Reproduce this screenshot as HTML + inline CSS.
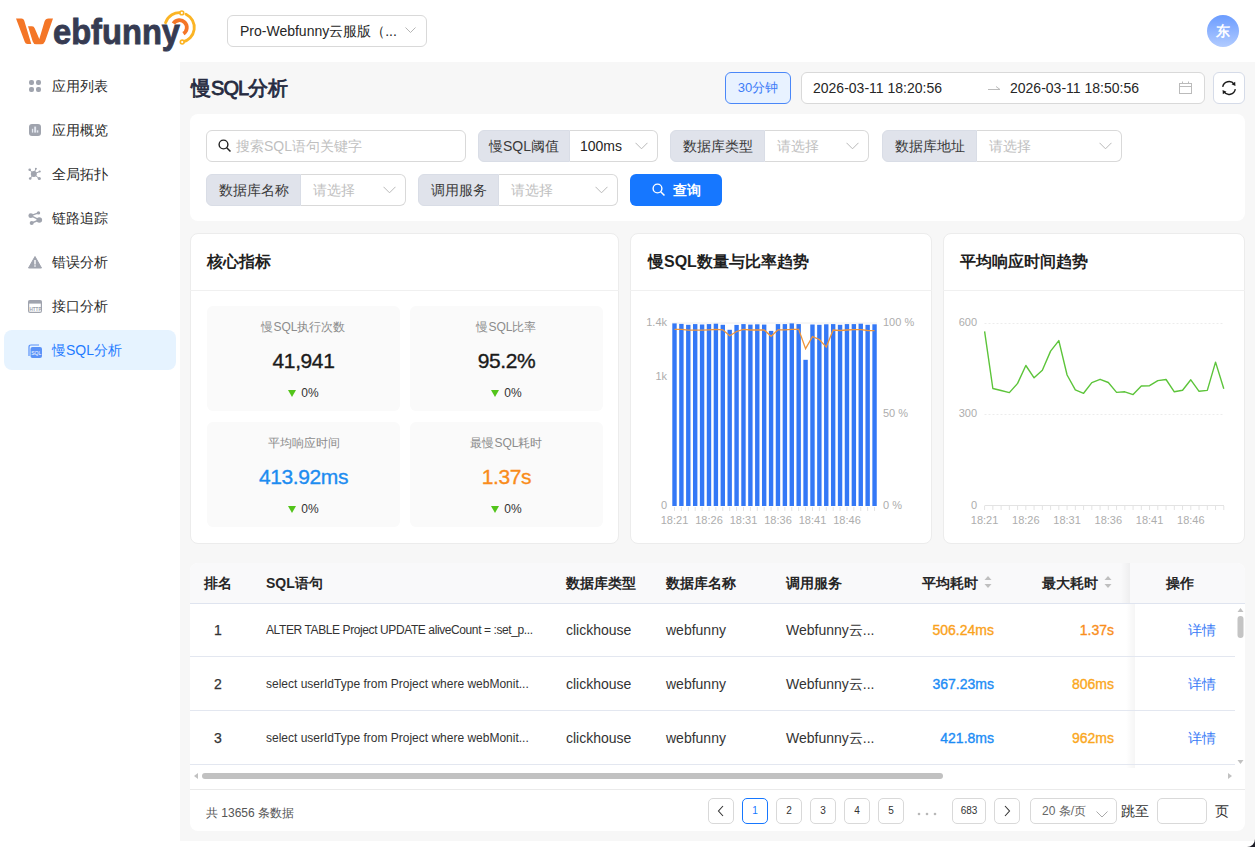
<!DOCTYPE html>
<html><head><meta charset="utf-8">
<style>
*{box-sizing:border-box;margin:0;padding:0}
html,body{width:1255px;height:847px;overflow:hidden;background:#fff;font-family:"Liberation Sans",sans-serif;color:#262626}
.a{position:absolute}
.main{left:180px;top:62px;width:1075px;height:779px;background:#f7f7f7}
.card{position:absolute;background:#fff;border-radius:8px}
.nav{position:absolute;left:4px;width:172px;height:40px;border-radius:8px;font-size:14px;line-height:40px;color:#2a2a2a}
.nav span{position:absolute;left:48px;top:0}
.nav svg{position:absolute;left:25px;top:14px}
.lbl{position:absolute;height:32px;background:#e0e3eb;border:1px solid #d9dde6;border-radius:6px 0 0 6px;font-size:14px;line-height:30px;color:#3a3a3a;text-align:center}
.sel{position:absolute;height:32px;background:#fff;border:1px solid #d9d9d9;border-left:none;border-radius:0 6px 6px 0;font-size:14px;line-height:30px;color:#bfbfbf;padding-left:12px}
.chev{position:absolute;right:9px;top:11px}
.ttl{position:absolute;top:250px;font-size:16px;line-height:24px;font-weight:bold;color:#1f1f1f}
.mb{position:absolute;width:193px;height:105px;background:#fafafa;border-radius:6px;text-align:center}
.ml{position:absolute;left:0;right:0;top:12px;line-height:18px;font-size:12px;color:#8c8c8c}
.mv{position:absolute;left:0;right:0;top:40px;line-height:30px;font-size:21px;letter-spacing:-0.4px;color:#1a1a1a;-webkit-text-stroke:0.35px}
.mc{position:absolute;left:0;right:0;top:79px;line-height:16px;font-size:12px;color:#333}
.mc i{display:inline-block;width:0;height:0;border-left:4px solid transparent;border-right:4px solid transparent;border-top:7px solid #52c41a;margin-right:5px;vertical-align:0px}
.th{position:absolute;top:563px;line-height:40px;font-size:14px;font-weight:bold;color:#262626}
.row{position:absolute;left:190px;width:1045px;height:54px;border-bottom:1px solid #e3e7f0}
.td{position:absolute;line-height:54px;font-size:14px;color:#333;white-space:nowrap}
.td.num{left:204px;width:28px;text-align:center;-webkit-text-stroke:0.25px}
.td.sql{left:266px;font-size:12px}
.td.r{text-align:right;-webkit-text-stroke:0.35px}
.td.lk{left:1188px;color:#3b7cf6}
.pg{position:absolute;top:798px;width:26px;height:26px;border:1px solid #d9d9d9;border-radius:5px;background:#fff;font-size:10px;line-height:24px;text-align:center;color:#333}
.pg.act{border-color:#1677ff;color:#1677ff}
</style></head><body>
<!-- header -->
<div class="a" style="left:0;top:0;width:1255px;height:62px;background:#fff"></div>
<svg class="a" style="left:0;top:0" width="200" height="60" viewBox="0 0 200 60">
  <path d="M16 18.5 L21.5 18.5 Q23.5 18.5 24.2 20.5 L31.3 44 L27.5 44 Q25.5 44 24.8 42 Z" fill="#f47627"/>
  <path d="M28 26.2 L32 26.2 Q34 26.2 34.8 28.5 L39.3 39 L44.5 21.5 Q45.5 18.5 48.5 18.5 L53 18.5 L45 41.5 Q44 44.2 41 44.2 L36 44.2 Q33.5 44.2 32.7 41.5 Z" fill="#f47627"/>
  <text x="53" y="44" font-family="Liberation Sans" font-weight="bold" font-size="35" fill="#363b52" stroke="#363b52" stroke-width="0.9" textLength="127" lengthAdjust="spacingAndGlyphs">ebfunny</text>
  <path d="M165.51 22.68 A14.8 14.8 0 0 1 181.82 12.88" stroke="#fbb424" stroke-width="2.8" fill="none" stroke-linecap="round"/>
  <path d="M185.99 14.20 A14.8 14.8 0 0 1 182.20 42.05" stroke="#fbb424" stroke-width="2.8" fill="none" stroke-linecap="round"/>
  <circle cx="181.82" cy="12.88" r="1.9" fill="#fff" stroke="#fbb424" stroke-width="1.6"/>
  <circle cx="182.20" cy="42.05" r="1.9" fill="#fff" stroke="#fbb424" stroke-width="1.6"/>
  <path d="M173.38 23.52 A7.3 7.3 0 1 1 183.37 33.69" stroke="#f47627" stroke-width="3.8" fill="none"/>
</svg>
<div class="a" style="left:227px;top:15px;width:200px;height:32px;border:1px solid #d9d9d9;border-radius:6px;background:#fff"></div>
<div class="a" style="left:240px;top:15px;height:32px;line-height:32px;font-size:14px;color:#262626;white-space:nowrap">Pro-Webfunny云服版（...</div>
<svg class="a" style="left:405px;top:27px" width="11" height="7"><path d="M0.5 0.5 L5.5 5.5 L10.5 0.5" stroke="#b5b5b5" fill="none"/></svg>
<div class="a" style="left:1207px;top:15px;width:32px;height:32px;border-radius:50%;background:linear-gradient(#6b9cff,#b1cbff);color:#fff;font-size:14px;line-height:33px;text-align:center;font-weight:bold">东</div>

<!-- sidebar -->
<div class="nav" style="top:66px"><svg width="13" height="13"><rect x="0" y="0" width="5" height="5" rx="2" fill="#a0a4ae"/><rect x="7" y="0" width="5" height="5" rx="2" fill="#a0a4ae"/><rect x="0" y="7" width="5" height="5" rx="2" fill="#a0a4ae"/><rect x="7" y="7" width="5" height="5" rx="2" fill="#a0a4ae"/></svg><span>应用列表</span></div>
<div class="nav" style="top:110px"><svg width="13" height="13"><rect x="0" y="0" width="12" height="12" rx="3" fill="#a0a4ae"/><rect x="2.9" y="4.8" width="1.3" height="3.8" fill="#e4e8f0"/><rect x="5.2" y="2.6" width="1.9" height="6" fill="#e4e8f0"/><rect x="7.8" y="6.3" width="1.5" height="2.3" fill="#e4e8f0"/></svg><span>应用概览</span></div>
<div class="nav" style="top:154px"><svg width="14" height="14" style="overflow:visible"><g stroke="#a0a4ae" stroke-width="1" fill="none"><path d="M4.8 6 L0.5 1.8 M4.8 6 L6.9 0.5 M4.8 6 L10.7 3.5 M4.8 6 L1 10.7 M4.8 6 L10.3 10.7"/></g><g fill="#a0a4ae"><circle cx="4.8" cy="6" r="3"/><circle cx="0.7" cy="1.8" r="1.3"/><circle cx="6.9" cy="0.7" r="1"/><circle cx="10.7" cy="3.5" r="1.1"/><circle cx="1.2" cy="10.5" r="1.3"/><circle cx="10.3" cy="10.5" r="1.6"/></g></svg><span>全局拓扑</span></div>
<div class="nav" style="top:198px"><svg width="14" height="14" style="overflow:visible"><g stroke="#a0a4ae" stroke-width="1.4" fill="none"><path d="M1.8 3.7 L9.5 0.8 M1.8 3.7 L10.3 8 L2.7 11"/></g><g fill="#a0a4ae"><circle cx="1.8" cy="3.7" r="2.4"/><circle cx="9.5" cy="0.9" r="1.7"/><circle cx="10.3" cy="8" r="2.8"/><circle cx="2.7" cy="11" r="2"/></g></svg><span>链路追踪</span></div>
<div class="nav" style="top:242px"><svg style="left:24px" width="14" height="13"><path d="M7 0.5 L13.5 12 L0.5 12 Z" fill="#a0a4ae" stroke="#a0a4ae" stroke-linejoin="round"/><rect x="6.3" y="4" width="1.4" height="4.5" fill="#fff"/><rect x="6.3" y="9.3" width="1.4" height="1.4" fill="#fff"/></svg><span>错误分析</span></div>
<div class="nav" style="top:286px"><svg style="left:24px" width="14" height="13"><rect x="0.6" y="0.6" width="12.8" height="11.8" rx="1.5" fill="none" stroke="#a0a4ae" stroke-width="1.2"/><rect x="0.6" y="0.6" width="12.8" height="3" fill="#a0a4ae"/><text x="7.5" y="10.8" font-size="6" font-family="Liberation Sans" font-weight="bold" text-anchor="middle" fill="#9a9eaa" textLength="12" lengthAdjust="spacingAndGlyphs">HTTP</text></svg><span>接口分析</span></div>
<div class="nav" style="top:330px;background:#e6f3ff;color:#1f7bff"><svg style="left:24px" width="14" height="15"><path d="M1 12 L1 3 Q1 1 3 1 L11 1" stroke="#5a92f8" stroke-width="1.2" fill="none"/><rect x="2.5" y="3" width="11.5" height="11" rx="2" fill="#5a92f8"/><text x="8.2" y="11" font-size="5" font-family="Liberation Sans" text-anchor="middle" fill="#fff">SQL</text></svg><span>慢SQL分析</span></div>

<!-- main -->
<div class="a main"></div>
<div class="a" style="left:191px;top:74px;font-size:20px;line-height:28px;color:#262b40;-webkit-text-stroke:0.8px">慢<span style="letter-spacing:-0.9px">SQL</span>分析</div>
<div class="a" style="left:725px;top:72px;width:66px;height:32px;border:1px solid #4a87f8;border-radius:6px;background:#e8f2ff;color:#3d7cf7;font-size:13px;line-height:30px;text-align:center">30分钟</div>
<div class="a" style="left:801px;top:72px;width:404px;height:32px;border:1px solid #d9d9d9;border-radius:6px;background:#fff"></div>
<div class="a" style="left:813px;top:72px;line-height:32px;font-size:14px;color:#262626">2026-03-11 18:20:56</div>
<svg class="a" style="left:988px;top:84px" width="13" height="8"><path d="M0 5.5 L12 5.5 L8 2.5" stroke="#bbb" fill="none"/></svg>
<div class="a" style="left:1010px;top:72px;line-height:32px;font-size:14px;color:#262626">2026-03-11 18:50:56</div>
<svg class="a" style="left:1179px;top:81px" width="14" height="14"><rect x="0.5" y="2.5" width="12" height="10" fill="none" stroke="#bbb"/><path d="M0.5 5.5 H12.5 M3.5 0.5 V3 M9.5 0.5 V3" stroke="#bbb"/></svg>
<div class="a" style="left:1213px;top:72px;width:32px;height:32px;border:1px solid #d5dbe8;border-radius:6px;background:#fff"></div>
<svg class="a" style="left:1215px;top:74px" width="28" height="28"><path d="M7.70 12.89 A6.4 6.4 0 0 1 19.24 10.33" stroke="#1a1a1a" stroke-width="1.4" fill="none"/><path d="M20.30 15.11 A6.4 6.4 0 0 1 8.76 17.67" stroke="#1a1a1a" stroke-width="1.4" fill="none"/><path d="M20.44 12.03 L20.15 7.79 L16.55 10.31 Z" fill="#1a1a1a"/><path d="M7.56 15.97 L7.85 20.21 L11.45 17.69 Z" fill="#1a1a1a"/></svg>

<!-- filter card -->
<div class="card" style="left:190px;top:114px;width:1055px;height:107px"></div>
<div class="a" style="left:206px;top:130px;width:260px;height:32px;border:1px solid #d9d9d9;border-radius:6px;background:#fff"></div>
<svg class="a" style="left:218px;top:139px" width="14" height="14"><circle cx="5.5" cy="5.5" r="4.4" stroke="#222" stroke-width="1.4" fill="none"/><path d="M8.7 8.7 L12.5 12.5" stroke="#222" stroke-width="1.5"/></svg>
<div class="a" style="left:236px;top:130px;line-height:32px;font-size:14px;color:#bfbfbf">搜索SQL语句关键字</div>

<div class="lbl" style="left:478px;top:130px;width:92px">慢SQL阈值</div>
<div class="sel" style="left:570px;top:130px;width:88px;color:#262626;padding-left:10px">100ms<svg class="chev" width="13" height="8"><path d="M0.5 0.8 L6.5 6.8 L12.5 0.8" stroke="#b8b8b8" fill="none"/></svg></div>
<div class="lbl" style="left:670px;top:130px;width:95px">数据库类型</div>
<div class="sel" style="left:765px;top:130px;width:104px">请选择<svg class="chev" width="13" height="8"><path d="M0.5 0.8 L6.5 6.8 L12.5 0.8" stroke="#b8b8b8" fill="none"/></svg></div>
<div class="lbl" style="left:882px;top:130px;width:95px">数据库地址</div>
<div class="sel" style="left:977px;top:130px;width:145px">请选择<svg class="chev" width="13" height="8"><path d="M0.5 0.8 L6.5 6.8 L12.5 0.8" stroke="#b8b8b8" fill="none"/></svg></div>

<div class="lbl" style="left:206px;top:174px;width:95px">数据库名称</div>
<div class="sel" style="left:301px;top:174px;width:105px">请选择<svg class="chev" width="13" height="8"><path d="M0.5 0.8 L6.5 6.8 L12.5 0.8" stroke="#b8b8b8" fill="none"/></svg></div>
<div class="lbl" style="left:418px;top:174px;width:81px">调用服务</div>
<div class="sel" style="left:499px;top:174px;width:119px">请选择<svg class="chev" width="13" height="8"><path d="M0.5 0.8 L6.5 6.8 L12.5 0.8" stroke="#b8b8b8" fill="none"/></svg></div>
<div class="a" style="left:630px;top:174px;width:92px;height:32px;border-radius:6px;background:#1677ff"></div>
<svg class="a" style="left:652px;top:183px" width="14" height="14"><circle cx="5.5" cy="5.5" r="4.4" stroke="#fff" stroke-width="1.4" fill="none"/><path d="M8.7 8.7 L12.5 12.5" stroke="#fff" stroke-width="1.5"/></svg>
<div class="a" style="left:673px;top:174px;line-height:32px;font-size:14px;color:#fff;font-weight:bold">查询</div>


<!-- core metrics card -->
<div class="card" style="left:190px;top:233px;width:429px;height:311px;border:1px solid #ececec"></div>
<div class="card" style="left:630px;top:233px;width:302px;height:311px;border:1px solid #ececec"></div>
<div class="card" style="left:943px;top:233px;width:302px;height:311px;border:1px solid #ececec"></div>
<div class="a" style="left:190px;top:290px;width:429px;height:1px;background:#f0f0f0"></div>
<div class="a" style="left:630px;top:290px;width:302px;height:1px;background:#f0f0f0"></div>
<div class="a" style="left:943px;top:290px;width:302px;height:1px;background:#f0f0f0"></div>
<div class="ttl" style="left:207px">核心指标</div>
<div class="ttl" style="left:648px">慢SQL数量与比率趋势</div>
<div class="ttl" style="left:960px">平均响应时间趋势</div>

<div class="mb" style="left:207px;top:306px"><div class="ml">慢SQL执行次数</div><div class="mv">41,941</div><div class="mc"><i></i>0%</div></div>
<div class="mb" style="left:410px;top:306px"><div class="ml">慢SQL比率</div><div class="mv">95.2%</div><div class="mc"><i></i>0%</div></div>
<div class="mb" style="left:207px;top:422px"><div class="ml">平均响应时间</div><div class="mv" style="color:#1d8cf0">413.92ms</div><div class="mc"><i></i>0%</div></div>
<div class="mb" style="left:410px;top:422px"><div class="ml">最慢SQL耗时</div><div class="mv" style="color:#f98c1b">1.37s</div><div class="mc"><i></i>0%</div></div>

<svg class="a" style="left:0;top:0" width="1255" height="847">
<line x1="672" y1="323" x2="877" y2="323" stroke="#eee" stroke-width="1"/>
<rect x="672.30" y="323.4" width="4.4" height="182.6" fill="#3478f6"/>
<rect x="679.20" y="323.9" width="4.4" height="182.1" fill="#3478f6"/>
<rect x="686.10" y="324.8" width="4.4" height="181.2" fill="#3478f6"/>
<rect x="692.99" y="324.1" width="4.4" height="181.9" fill="#3478f6"/>
<rect x="699.89" y="324.5" width="4.4" height="181.5" fill="#3478f6"/>
<rect x="706.79" y="324.1" width="4.4" height="181.9" fill="#3478f6"/>
<rect x="713.69" y="323.7" width="4.4" height="182.3" fill="#3478f6"/>
<rect x="720.59" y="324.8" width="4.4" height="181.2" fill="#3478f6"/>
<rect x="727.49" y="329.8" width="4.4" height="176.2" fill="#3478f6"/>
<rect x="734.38" y="324.9" width="4.4" height="181.1" fill="#3478f6"/>
<rect x="741.28" y="324.1" width="4.4" height="181.9" fill="#3478f6"/>
<rect x="748.18" y="324.6" width="4.4" height="181.4" fill="#3478f6"/>
<rect x="755.08" y="324.3" width="4.4" height="181.7" fill="#3478f6"/>
<rect x="761.98" y="324.6" width="4.4" height="181.4" fill="#3478f6"/>
<rect x="768.88" y="330.9" width="4.4" height="175.1" fill="#3478f6"/>
<rect x="775.77" y="324.1" width="4.4" height="181.9" fill="#3478f6"/>
<rect x="782.67" y="324.1" width="4.4" height="181.9" fill="#3478f6"/>
<rect x="789.57" y="323.4" width="4.4" height="182.6" fill="#3478f6"/>
<rect x="796.47" y="324.1" width="4.4" height="181.9" fill="#3478f6"/>
<rect x="803.37" y="359.8" width="4.4" height="146.2" fill="#3478f6"/>
<rect x="810.27" y="324.5" width="4.4" height="181.5" fill="#3478f6"/>
<rect x="817.16" y="324.8" width="4.4" height="181.2" fill="#3478f6"/>
<rect x="824.06" y="324.3" width="4.4" height="181.7" fill="#3478f6"/>
<rect x="830.96" y="324.1" width="4.4" height="181.9" fill="#3478f6"/>
<rect x="837.86" y="324.8" width="4.4" height="181.2" fill="#3478f6"/>
<rect x="844.76" y="324.1" width="4.4" height="181.9" fill="#3478f6"/>
<rect x="851.66" y="324.1" width="4.4" height="181.9" fill="#3478f6"/>
<rect x="858.55" y="323.7" width="4.4" height="182.3" fill="#3478f6"/>
<rect x="865.45" y="324.8" width="4.4" height="181.2" fill="#3478f6"/>
<rect x="872.35" y="324.3" width="4.4" height="181.7" fill="#3478f6"/>
<polyline points="674.50,329.3 681.40,329.3 688.30,330.2 695.19,330.2 702.09,330.2 708.99,329.8 715.89,329.3 722.79,329.8 729.69,335.7 736.58,331.5 743.48,329.3 750.38,330.0 757.28,330.0 764.18,330.0 771.08,336.3 777.97,329.8 784.87,329.8 791.77,329.3 798.67,329.3 805.57,348.6 812.47,336.6 819.36,339.5 826.26,347.1 833.16,330.0 840.06,330.5 846.96,330.0 853.86,329.6 860.75,329.6 867.65,330.5 874.55,330.7" fill="none" stroke="#f0953a" stroke-width="1.3"/>
<line x1="674.50" y1="507" x2="674.50" y2="511" stroke="#e3e3e3" stroke-width="1"/>
<line x1="681.40" y1="507" x2="681.40" y2="511" stroke="#e3e3e3" stroke-width="1"/>
<line x1="688.30" y1="507" x2="688.30" y2="511" stroke="#e3e3e3" stroke-width="1"/>
<line x1="695.19" y1="507" x2="695.19" y2="511" stroke="#e3e3e3" stroke-width="1"/>
<line x1="702.09" y1="507" x2="702.09" y2="511" stroke="#e3e3e3" stroke-width="1"/>
<line x1="708.99" y1="507" x2="708.99" y2="511" stroke="#e3e3e3" stroke-width="1"/>
<line x1="715.89" y1="507" x2="715.89" y2="511" stroke="#e3e3e3" stroke-width="1"/>
<line x1="722.79" y1="507" x2="722.79" y2="511" stroke="#e3e3e3" stroke-width="1"/>
<line x1="729.69" y1="507" x2="729.69" y2="511" stroke="#e3e3e3" stroke-width="1"/>
<line x1="736.58" y1="507" x2="736.58" y2="511" stroke="#e3e3e3" stroke-width="1"/>
<line x1="743.48" y1="507" x2="743.48" y2="511" stroke="#e3e3e3" stroke-width="1"/>
<line x1="750.38" y1="507" x2="750.38" y2="511" stroke="#e3e3e3" stroke-width="1"/>
<line x1="757.28" y1="507" x2="757.28" y2="511" stroke="#e3e3e3" stroke-width="1"/>
<line x1="764.18" y1="507" x2="764.18" y2="511" stroke="#e3e3e3" stroke-width="1"/>
<line x1="771.08" y1="507" x2="771.08" y2="511" stroke="#e3e3e3" stroke-width="1"/>
<line x1="777.97" y1="507" x2="777.97" y2="511" stroke="#e3e3e3" stroke-width="1"/>
<line x1="784.87" y1="507" x2="784.87" y2="511" stroke="#e3e3e3" stroke-width="1"/>
<line x1="791.77" y1="507" x2="791.77" y2="511" stroke="#e3e3e3" stroke-width="1"/>
<line x1="798.67" y1="507" x2="798.67" y2="511" stroke="#e3e3e3" stroke-width="1"/>
<line x1="805.57" y1="507" x2="805.57" y2="511" stroke="#e3e3e3" stroke-width="1"/>
<line x1="812.47" y1="507" x2="812.47" y2="511" stroke="#e3e3e3" stroke-width="1"/>
<line x1="819.36" y1="507" x2="819.36" y2="511" stroke="#e3e3e3" stroke-width="1"/>
<line x1="826.26" y1="507" x2="826.26" y2="511" stroke="#e3e3e3" stroke-width="1"/>
<line x1="833.16" y1="507" x2="833.16" y2="511" stroke="#e3e3e3" stroke-width="1"/>
<line x1="840.06" y1="507" x2="840.06" y2="511" stroke="#e3e3e3" stroke-width="1"/>
<line x1="846.96" y1="507" x2="846.96" y2="511" stroke="#e3e3e3" stroke-width="1"/>
<line x1="853.86" y1="507" x2="853.86" y2="511" stroke="#e3e3e3" stroke-width="1"/>
<line x1="860.75" y1="507" x2="860.75" y2="511" stroke="#e3e3e3" stroke-width="1"/>
<line x1="867.65" y1="507" x2="867.65" y2="511" stroke="#e3e3e3" stroke-width="1"/>
<line x1="874.55" y1="507" x2="874.55" y2="511" stroke="#e3e3e3" stroke-width="1"/>
<text x="674.5" y="524" font-size="11" text-anchor="middle" fill="#adadad" font-family="Liberation Sans">18:21</text>
<text x="709.0" y="524" font-size="11" text-anchor="middle" fill="#adadad" font-family="Liberation Sans">18:26</text>
<text x="743.5" y="524" font-size="11" text-anchor="middle" fill="#adadad" font-family="Liberation Sans">18:31</text>
<text x="778.0" y="524" font-size="11" text-anchor="middle" fill="#adadad" font-family="Liberation Sans">18:36</text>
<text x="812.5" y="524" font-size="11" text-anchor="middle" fill="#adadad" font-family="Liberation Sans">18:41</text>
<text x="847.0" y="524" font-size="11" text-anchor="middle" fill="#adadad" font-family="Liberation Sans">18:46</text>
<text x="667" y="326" font-size="11" text-anchor="end" fill="#adadad" font-family="Liberation Sans">1.4k</text>
<text x="667" y="380" font-size="11" text-anchor="end" fill="#adadad" font-family="Liberation Sans">1k</text>
<text x="667" y="509" font-size="11" text-anchor="end" fill="#adadad" font-family="Liberation Sans">0</text>
<text x="883" y="326" font-size="11" fill="#adadad" font-family="Liberation Sans">100 %</text>
<text x="883" y="417" font-size="11" fill="#adadad" font-family="Liberation Sans">50 %</text>
<text x="883" y="509" font-size="11" fill="#adadad" font-family="Liberation Sans">0 %</text>
<line x1="984.5" y1="323.5" x2="1224" y2="323.5" stroke="#ececec" stroke-dasharray="2,2"/>
<line x1="984.5" y1="414.5" x2="1224" y2="414.5" stroke="#ececec" stroke-dasharray="2,2"/>
<line x1="984.5" y1="505.5" x2="1224" y2="505.5" stroke="#e3e3e3"/>
<line x1="984.60" y1="506" x2="984.60" y2="510" stroke="#e3e3e3"/>
<line x1="992.85" y1="506" x2="992.85" y2="510" stroke="#e3e3e3"/>
<line x1="1001.10" y1="506" x2="1001.10" y2="510" stroke="#e3e3e3"/>
<line x1="1009.34" y1="506" x2="1009.34" y2="510" stroke="#e3e3e3"/>
<line x1="1017.59" y1="506" x2="1017.59" y2="510" stroke="#e3e3e3"/>
<line x1="1025.84" y1="506" x2="1025.84" y2="510" stroke="#e3e3e3"/>
<line x1="1034.09" y1="506" x2="1034.09" y2="510" stroke="#e3e3e3"/>
<line x1="1042.34" y1="506" x2="1042.34" y2="510" stroke="#e3e3e3"/>
<line x1="1050.59" y1="506" x2="1050.59" y2="510" stroke="#e3e3e3"/>
<line x1="1058.83" y1="506" x2="1058.83" y2="510" stroke="#e3e3e3"/>
<line x1="1067.08" y1="506" x2="1067.08" y2="510" stroke="#e3e3e3"/>
<line x1="1075.33" y1="506" x2="1075.33" y2="510" stroke="#e3e3e3"/>
<line x1="1083.58" y1="506" x2="1083.58" y2="510" stroke="#e3e3e3"/>
<line x1="1091.83" y1="506" x2="1091.83" y2="510" stroke="#e3e3e3"/>
<line x1="1100.08" y1="506" x2="1100.08" y2="510" stroke="#e3e3e3"/>
<line x1="1108.32" y1="506" x2="1108.32" y2="510" stroke="#e3e3e3"/>
<line x1="1116.57" y1="506" x2="1116.57" y2="510" stroke="#e3e3e3"/>
<line x1="1124.82" y1="506" x2="1124.82" y2="510" stroke="#e3e3e3"/>
<line x1="1133.07" y1="506" x2="1133.07" y2="510" stroke="#e3e3e3"/>
<line x1="1141.32" y1="506" x2="1141.32" y2="510" stroke="#e3e3e3"/>
<line x1="1149.57" y1="506" x2="1149.57" y2="510" stroke="#e3e3e3"/>
<line x1="1157.81" y1="506" x2="1157.81" y2="510" stroke="#e3e3e3"/>
<line x1="1166.06" y1="506" x2="1166.06" y2="510" stroke="#e3e3e3"/>
<line x1="1174.31" y1="506" x2="1174.31" y2="510" stroke="#e3e3e3"/>
<line x1="1182.56" y1="506" x2="1182.56" y2="510" stroke="#e3e3e3"/>
<line x1="1190.81" y1="506" x2="1190.81" y2="510" stroke="#e3e3e3"/>
<line x1="1199.06" y1="506" x2="1199.06" y2="510" stroke="#e3e3e3"/>
<line x1="1207.30" y1="506" x2="1207.30" y2="510" stroke="#e3e3e3"/>
<line x1="1215.55" y1="506" x2="1215.55" y2="510" stroke="#e3e3e3"/>
<line x1="1223.80" y1="506" x2="1223.80" y2="510" stroke="#e3e3e3"/>
<polyline points="984.60,331.3 992.85,388.5 1001.10,390.5 1009.34,392.6 1017.59,383.4 1025.84,365.5 1034.09,377.8 1042.34,370.2 1050.59,351.1 1058.83,340.6 1067.08,375.0 1075.33,389.9 1083.58,393.3 1091.83,382.6 1100.08,379.3 1108.32,382.5 1116.57,392.4 1124.82,391.8 1133.07,394.6 1141.32,386.0 1149.57,385.7 1157.81,380.6 1166.06,379.5 1174.31,391.8 1182.56,390.2 1190.81,379.8 1199.06,391.3 1207.30,390.4 1215.55,362.1 1223.80,388.7" fill="none" stroke="#5cc43a" stroke-width="1.4" stroke-linejoin="round"/>
<text x="984.6" y="524" font-size="11" text-anchor="middle" fill="#adadad" font-family="Liberation Sans">18:21</text>
<text x="1025.8" y="524" font-size="11" text-anchor="middle" fill="#adadad" font-family="Liberation Sans">18:26</text>
<text x="1067.1" y="524" font-size="11" text-anchor="middle" fill="#adadad" font-family="Liberation Sans">18:31</text>
<text x="1108.3" y="524" font-size="11" text-anchor="middle" fill="#adadad" font-family="Liberation Sans">18:36</text>
<text x="1149.6" y="524" font-size="11" text-anchor="middle" fill="#adadad" font-family="Liberation Sans">18:41</text>
<text x="1190.8" y="524" font-size="11" text-anchor="middle" fill="#adadad" font-family="Liberation Sans">18:46</text>
<text x="977" y="326" font-size="11" text-anchor="end" fill="#adadad" font-family="Liberation Sans">600</text>
<text x="977" y="417" font-size="11" text-anchor="end" fill="#adadad" font-family="Liberation Sans">300</text>
<text x="977" y="509" font-size="11" text-anchor="end" fill="#adadad" font-family="Liberation Sans">0</text>
</svg>

<!-- table card -->
<div class="card" style="left:190px;top:563px;width:1055px;height:268px"></div>
<div class="a" style="left:190px;top:563px;width:1055px;height:41px;background:#f9f9fa;border-radius:8px 8px 0 0;border-bottom:1px solid #dfe4ef"></div>
<div class="th" style="left:204px">排名</div>
<div class="th" style="left:266px">SQL语句</div>
<div class="th" style="left:566px">数据库类型</div>
<div class="th" style="left:666px">数据库名称</div>
<div class="th" style="left:786px">调用服务</div>
<div class="th" style="left:922px">平均耗时</div>
<div class="th" style="left:1042px">最大耗时</div>
<div class="th" style="left:1166px">操作</div>
<svg class="a" style="left:984px;top:575px" width="8" height="14"><path d="M4 1 L7.5 5 L0.5 5 Z" fill="#bfbfbf"/><path d="M4 13 L7.5 9 L0.5 9 Z" fill="#bfbfbf"/></svg>
<svg class="a" style="left:1104px;top:575px" width="8" height="14"><path d="M4 1 L7.5 5 L0.5 5 Z" fill="#bfbfbf"/><path d="M4 13 L7.5 9 L0.5 9 Z" fill="#bfbfbf"/></svg>
<div class="a" style="left:1121px;top:563px;width:9px;height:40px;background:linear-gradient(90deg,rgba(0,0,0,0),rgba(0,0,0,0.045))"></div>
<div class="a" style="left:1126px;top:604px;width:9px;height:164px;background:linear-gradient(90deg,rgba(0,0,0,0),rgba(0,0,0,0.04))"></div>

<div class="row" style="top:603px"></div>
<div class="row" style="top:657px"></div>
<div class="row" style="top:711px"></div>
<div class="td num" style="top:603px">1</div>
<div class="td sql" style="top:603px"><span style="letter-spacing:-0.4px">ALTER TABLE Project UPDATE aliveCount = :set_p...</span></div>
<div class="td" style="top:603px;left:566px">clickhouse</div>
<div class="td" style="top:603px;left:666px">webfunny</div>
<div class="td" style="top:603px;left:786px">Webfunny云...</div>
<div class="td r" style="top:603px;right:261px;color:#faa21b">506.24ms</div>
<div class="td r" style="top:603px;right:141px;color:#f98e1c">1.37s</div>
<div class="td lk" style="top:603px">详情</div>

<div class="td num" style="top:657px">2</div>
<div class="td sql" style="top:657px">select userIdType from Project where webMonit...</div>
<div class="td" style="top:657px;left:566px">clickhouse</div>
<div class="td" style="top:657px;left:666px">webfunny</div>
<div class="td" style="top:657px;left:786px">Webfunny云...</div>
<div class="td r" style="top:657px;right:261px;color:#1c8cf5">367.23ms</div>
<div class="td r" style="top:657px;right:141px;color:#faa71d">806ms</div>
<div class="td lk" style="top:657px">详情</div>

<div class="td num" style="top:711px">3</div>
<div class="td sql" style="top:711px">select userIdType from Project where webMonit...</div>
<div class="td" style="top:711px;left:566px">clickhouse</div>
<div class="td" style="top:711px;left:666px">webfunny</div>
<div class="td" style="top:711px;left:786px">Webfunny云...</div>
<div class="td r" style="top:711px;right:261px;color:#1c8cf5">421.8ms</div>
<div class="td r" style="top:711px;right:141px;color:#faa71d">962ms</div>
<div class="td lk" style="top:711px">详情</div>

<!-- scrollbars -->
<div class="a" style="left:1236px;top:604px;width:9px;height:164px;background:#fff"></div>
<svg class="a" style="left:1236px;top:604px" width="9" height="164"><path d="M4.5 4 L7.5 8 L1.5 8 Z" fill="#c1c1c1"/><path d="M4.5 160 L7.5 156 L1.5 156 Z" fill="#c1c1c1"/><rect x="1.5" y="12" width="6" height="22" rx="3" fill="#c4c4c4"/></svg>
<svg class="a" style="left:190px;top:768px" width="1046" height="16"><path d="M4 8 L8 5 L8 11 Z" fill="#c1c1c1"/><path d="M1042 8 L1038 5 L1038 11 Z" fill="#c1c1c1"/><rect x="12" y="5" width="741" height="6" rx="3" fill="#c1c1c1"/></svg>
<div class="a" style="left:190px;top:789px;width:1055px;height:1px;background:#eaeaea"></div>

<div class="a" style="left:206px;top:802px;line-height:22px;font-size:12px;color:#555">共 13656 条数据</div>
<div class="pg" style="left:708px"><svg width="8" height="12" style="margin-top:6px"><path d="M6 1 L1.5 6 L6 11" stroke="#333" stroke-width="1.1" fill="none"/></svg></div>
<div class="pg act" style="left:742px">1</div>
<div class="pg" style="left:776px">2</div>
<div class="pg" style="left:810px">3</div>
<div class="pg" style="left:844px">4</div>
<div class="pg" style="left:878px">5</div>
<svg class="a" style="left:916px;top:812px" width="24" height="4"><circle cx="3" cy="2" r="1.3" fill="#b8b8b8"/><circle cx="11" cy="2" r="1.3" fill="#b8b8b8"/><circle cx="19" cy="2" r="1.3" fill="#b8b8b8"/></svg>
<div class="pg" style="left:952px;width:34px">683</div>
<div class="pg" style="left:994px"><svg width="8" height="12" style="margin-top:6px"><path d="M2 1 L6.5 6 L2 11" stroke="#333" stroke-width="1.1" fill="none"/></svg></div>
<div class="pg" style="left:1030px;width:87px;text-align:left;padding-left:11px;color:#666;font-size:12px">20 条/页<svg width="12" height="7" style="position:absolute;left:65px;top:12px"><path d="M0.5 0.5 L6 6 L11.5 0.5" stroke="#aaa" fill="none"/></svg></div>
<div class="a" style="left:1121px;top:800px;line-height:22px;font-size:14px;color:#333">跳至</div>
<div class="pg" style="left:1157px;width:50px"></div>
<div class="a" style="left:1215px;top:800px;line-height:22px;font-size:14px;color:#333">页</div>
<svg class="a" style="left:1240px;top:832px" width="15" height="15"><path d="M15 7 A8 8 0 0 1 7 15 L15 15 Z" fill="#1e1e28"/></svg>
</body></html>
